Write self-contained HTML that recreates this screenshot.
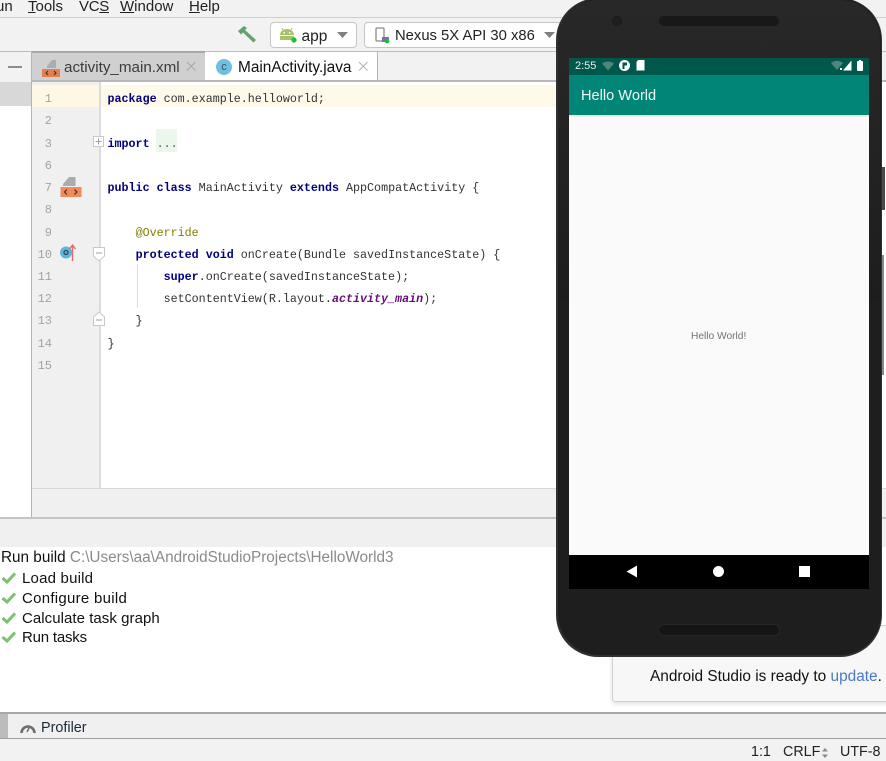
<!DOCTYPE html>
<html>
<head>
<meta charset="utf-8">
<style>
html,body{margin:0;padding:0;background:#fff;}
#r{position:relative;width:886px;height:761px;overflow:hidden;background:#fff;font-family:"Liberation Sans",sans-serif;color:#1c1c1c;}
.a{position:absolute;}
.t{position:absolute;white-space:nowrap;}
.c{position:absolute;left:107.5px;white-space:pre;font:11.7px/14px "Liberation Mono",monospace;color:#333;}
.c b{color:#000080;font-weight:bold;}
.n{position:absolute;left:32px;width:20px;text-align:right;font:12px/14px "Liberation Mono",monospace;color:#a3a3a3;}
.me{position:absolute;top:-2px;font-size:15px;line-height:17px;color:#222;white-space:nowrap;}
.b{position:absolute;left:22px;font-size:15px;line-height:18px;color:#111;white-space:nowrap;}
</style>
</head>
<body>
<div id="r">
  <!-- menu -->
  <div class="a" style="left:0;top:0;width:886px;height:17px;background:#f2f2f2"></div>
  <div class="me" style="left:-4px">un</div>
  <div class="me" style="left:28px"><u>T</u>ools</div>
  <div class="me" style="left:79px;letter-spacing:-.3px">VC<u>S</u></div>
  <div class="me" style="left:120px"><u>W</u>indow</div>
  <div class="me" style="left:189px"><u>H</u>elp</div>
  <div class="a" style="left:0;top:17px;width:886px;height:1px;background:#cfcfcf"></div>
  <!-- toolbar -->
  <div class="a" style="left:0;top:18px;width:886px;height:34px;background:#f2f2f2"></div>
  <div class="a" style="left:0;top:51px;width:886px;height:1px;background:#bdbdbd"></div>
  <svg class="a" style="left:236px;top:24px" width="22" height="20" viewBox="0 0 22 20"><path d="M2 7 L8 2 L11 4 L9 6 L20 16 L17.5 18.5 L7 8.5 L5 10.5 Z" fill="#5fa36d"/></svg>

  <div class="a" style="left:270px;top:22px;width:85px;height:24px;border:1px solid #c6c6c6;border-radius:4px;background:#fff"></div>
  <svg class="a" style="left:279px;top:28px" width="20" height="17" viewBox="0 0 20 17"><path d="M1 7 A7 6 0 0 1 15 7 Z M1 8 H15 V12 H1 Z" fill="#a4c36a"/><path d="M4 2 L3 0 M12 2 L13 0" stroke="#a4c36a"/><rect x="4.500" y="4" width="1.500" height="1.500" fill="#fff"/><rect x="10" y="4" width="1.500" height="1.500" fill="#fff"/><circle cx="15" cy="12" r="2.6" fill="#1fc02f"/></svg>
  <div class="t" style="left:301.5px;top:27.500px;font-size:15.500px;line-height:17px;color:#222">app</div>
  <svg class="a" style="left:337px;top:32px" width="12" height="8"><path d="M0 0 H11 L5.5 6 Z" fill="#808080"/></svg>

  <div class="a" style="left:364px;top:22px;width:200px;height:24px;border:1px solid #c6c6c6;border-radius:4px;background:#fff"></div>
  <svg class="a" style="left:375px;top:27px" width="18" height="18" viewBox="0 0 18 18"><rect x="1" y="1" width="8" height="13" rx="1" fill="none" stroke="#8a8a8a" stroke-width="1.3"/><rect x="7" y="10" width="7" height="5" fill="#8268b8"/><circle cx="12" cy="14" r="2.4" fill="#1fc02f"/></svg>
  <div class="t" style="left:395px;top:27.500px;font-size:14.800px;line-height:17px;color:#222">Nexus 5X API 30 x86</div>
  <svg class="a" style="left:544px;top:32px" width="12" height="8"><path d="M0 0 H11 L5.5 6 Z" fill="#808080"/></svg>

  <!-- left side -->
  <div class="a" style="left:0;top:52px;width:31px;height:30px;background:#f2f2f2"></div>
  <div class="a" style="left:8px;top:66px;width:14px;height:2px;background:#8c8c8c"></div>
  <div class="a" style="left:0;top:82px;width:31px;height:24px;background:#d8d8d8"></div>
  <div class="a" style="left:31px;top:52px;width:1px;height:465px;background:#b4b4b4"></div>

  <!-- tabs -->
  <div class="a" style="left:32px;top:52px;width:854px;height:29px;background:#f2f2f2"></div>
  <div class="a" style="left:32px;top:52px;width:173px;height:28px;background:#d0d0d0;border-right:1px solid #adadad"></div>
  <div class="a" style="left:32px;top:51px;width:173px;height:2px;background:#a8a8a8"></div>
  <svg class="a" style="left:42px;top:59px" width="18" height="19" viewBox="0 0 18 19"><path d="M5 7 L10 1 H14 V9 H5 Z" fill="#a8adb2"/><rect x="0" y="10" width="18" height="8" fill="#e57f50"/><path d="M6 12 L4 14 L6 16 M12 12 L14 14 L12 16" stroke="#3a2a20" fill="none" stroke-width="1"/></svg>
  <div class="t" style="left:64px;top:59px;font-size:15.200px;line-height:18px;color:#3c3c3c">activity_main.xml</div>
  <svg class="a" style="left:186px;top:61px" width="11" height="11"><path d="M1 1 L9.5 9.5 M9.5 1 L1 9.5" stroke="#a8a8a8" stroke-width="1.1"/></svg>
  <div class="a" style="left:205px;top:52px;width:172px;height:29px;background:#fff;border-right:1px solid #b4b4b4"></div>
  <div class="a" style="left:216px;top:59px;width:16px;height:16px;border-radius:50%;background:#6fc0e0;color:#34505c;font:11px/16px 'Liberation Sans',sans-serif;text-align:center">c</div>
  <div class="t" style="left:238px;top:59px;font-size:15.400px;line-height:18px;color:#111">MainActivity.java</div>
  <svg class="a" style="left:358px;top:61px" width="11" height="11"><path d="M1 1 L9.5 9.5 M9.5 1 L1 9.5" stroke="#b4b4b4" stroke-width="1.1"/></svg>
  <div class="a" style="left:32px;top:80px;width:854px;height:2px;background:#b8b8b8"></div>

  <!-- gutter + editor -->
  <div class="a" style="left:32px;top:82px;width:67px;height:406px;background:#f0f0f0"></div>
  <div class="a" style="left:99px;top:82px;width:2px;height:406px;background:#dcdcdc"></div>
  <div class="a" style="left:32px;top:85px;width:67px;height:22px;background:#fdf7e3"></div>
  <div class="a" style="left:101px;top:85px;width:460px;height:22px;background:#fef9e8"></div>
  <div class="a" style="left:156px;top:129px;width:21px;height:23px;background:#ebf7eb"></div>

  <div class="n" style="top:92px">1</div>
  <div class="n" style="top:114px">2</div>
  <div class="n" style="top:137px">3</div>
  <div class="n" style="top:159px">6</div>
  <div class="n" style="top:181px">7</div>
  <div class="n" style="top:203px">8</div>
  <div class="n" style="top:226px">9</div>
  <div class="n" style="top:248px">10</div>
  <div class="n" style="top:270px">11</div>
  <div class="n" style="top:292px">12</div>
  <div class="n" style="top:314px">13</div>
  <div class="n" style="top:337px">14</div>
  <div class="n" style="top:359px">15</div>

  <div class="c" style="top:92px"><b>package</b> com.example.helloworld;</div>
  <div class="c" style="top:137px"><b>import</b> <span style="color:#555">...</span></div>
  <div class="c" style="top:181px"><b>public class</b> MainActivity <b>extends</b> AppCompatActivity {</div>
  <div class="c" style="top:226px">    <span style="color:#808000">@Override</span></div>
  <div class="c" style="top:248px">    <b>protected void</b> onCreate(Bundle savedInstanceState) {</div>
  <div class="c" style="top:270px">        <b>super</b>.onCreate(savedInstanceState);</div>
  <div class="c" style="top:292px">        setContentView(R.layout.<b style="color:#660e7a;font-style:italic">activity_main</b>);</div>
  <div class="c" style="top:314px">    }</div>
  <div class="c" style="top:337px">}</div>

  <!-- gutter icons -->
  <svg class="a" style="left:60px;top:175px" width="22" height="23" viewBox="0 0 22 23"><path d="M3 9 L9 2 H15.500 V11 H3 Z" fill="#a8adb2"/><rect x="0.500" y="12" width="21" height="10" fill="#f08a58"/><path d="M7 14.500 L4.500 17 L7 19.500 M14.500 14.500 L17 17 L14.500 19.500" stroke="#3a2a20" fill="none" stroke-width="1.1"/></svg>
  <svg class="a" style="left:59px;top:243px" width="20" height="19" viewBox="0 0 20 19"><circle cx="7" cy="9.500" r="6" fill="#5cb6dc"/><circle cx="7" cy="9.500" r="2" fill="none" stroke="#33485a" stroke-width="1.300"/><path d="M13.500 18 V3 M10.500 6 L13.500 2 L16.500 6" stroke="#e06a6a" fill="none" stroke-width="1.400"/></svg>
  <svg class="a" style="left:93px;top:136px" width="13" height="13"><rect x="0.500" y="0.500" width="10" height="10" fill="#fff" stroke="#c8c8c8"/><path d="M2.500 5.500 H8.500 M5.500 2.500 V8.500" stroke="#a0a0a0"/></svg>
  <svg class="a" style="left:93px;top:247px" width="13" height="15"><path d="M0.500 0.500 H11.500 V9 L6 14 L0.500 9 Z" fill="#fff" stroke="#c8c8c8"/><path d="M3 6 H9" stroke="#a0a0a0"/></svg>
  <svg class="a" style="left:93px;top:311px" width="13" height="15"><path d="M0.500 14.500 H11.500 V6 L6 1 L0.500 6 Z" fill="#fff" stroke="#c8c8c8"/><path d="M3 9 H9" stroke="#a0a0a0"/></svg>
  <div class="a" style="left:137px;top:264px;width:1px;height:44px;background:#dedede"></div>

  <!-- editor bottom -->
  <div class="a" style="left:32px;top:488px;width:854px;height:29px;background:#f0f0f0;border-top:1px solid #d8d8d8;box-sizing:border-box"></div>
  <div class="a" style="left:0;top:517px;width:886px;height:2px;background:#c4c4c4"></div>
  <div class="a" style="left:0;top:519px;width:886px;height:28px;background:#f0f0f0"></div>

  <!-- build -->
  <div class="t" style="left:1px;top:549px;font-size:15.300px;line-height:18px;color:#111">Run build <span style="color:#8a8a8a">C:\Users\aa\AndroidStudioProjects\HelloWorld3</span></div>
  <svg class="a" style="left:1px;top:571px" width="16" height="14"><path d="M1.500 7 L6 11 L14 2.500" fill="none" stroke="#7cc070" stroke-width="3"/></svg>
  <svg class="a" style="left:1px;top:591px" width="16" height="14"><path d="M1.500 7 L6 11 L14 2.500" fill="none" stroke="#7cc070" stroke-width="3"/></svg>
  <svg class="a" style="left:1px;top:611px" width="16" height="14"><path d="M1.500 7 L6 11 L14 2.500" fill="none" stroke="#7cc070" stroke-width="3"/></svg>
  <svg class="a" style="left:1px;top:630px" width="16" height="14"><path d="M1.500 7 L6 11 L14 2.500" fill="none" stroke="#7cc070" stroke-width="3"/></svg>
  <div class="b" style="top:570px;letter-spacing:.2px">Load build</div>
  <div class="b" style="top:590px;letter-spacing:.28px">Configure build</div>
  <div class="b" style="top:610px;letter-spacing:.05px">Calculate task graph</div>
  <div class="b" style="top:629px;letter-spacing:-.2px">Run tasks</div>

  <!-- notification -->
  <div class="a" style="left:612px;top:625px;width:280px;height:77px;background:#f7f7f7;border:1px solid #d0d0d0;box-sizing:border-box;border-radius:3px;box-shadow:0 2px 5px rgba(0,0,0,.12)"></div>
  <div class="t" style="left:650px;top:668px;font-size:15.400px;line-height:18px;color:#111">Android Studio is ready to <span style="color:#4a78c8">update</span>.</div>

  <!-- bottom bars -->
  <div class="a" style="left:0;top:712px;width:886px;height:2px;background:#a8a8a8"></div>
  <div class="a" style="left:0;top:714px;width:886px;height:24px;background:#f0f0f0"></div>
  <div class="a" style="left:0;top:714px;width:8px;height:24px;background:#bcbcbc"></div>
  <svg class="a" style="left:20px;top:722px" width="16" height="12" viewBox="0 0 16 12"><path d="M1.500 11 A6.500 6.500 0 0 1 14.500 11" fill="none" stroke="#6e6e6e" stroke-width="2.600"/><path d="M7 10 L10 4" stroke="#6e6e6e" stroke-width="1.500"/></svg>
  <div class="t" style="left:41px;top:720px;font-size:14.400px;line-height:16px;color:#1c2a3a">Profiler</div>
  <div class="a" style="left:0;top:738px;width:886px;height:1px;background:#a0a0a0"></div>
  <div class="a" style="left:0;top:739px;width:886px;height:22px;background:#f2f2f2"></div>
  <div class="t" style="left:751px;top:744px;font-size:14.300px;line-height:17px;color:#222">1:1</div>
  <div class="t" style="left:783px;top:744px;font-size:14.300px;line-height:17px;color:#222">CRLF</div>
  <svg class="a" style="left:821px;top:748px" width="8" height="11"><path d="M4 0 L7 3.500 H1 Z M4 10 L7 6.500 H1 Z" fill="#8a8a8a"/></svg>
  <div class="t" style="left:840px;top:744px;font-size:14.300px;line-height:17px;color:#222">UTF-8</div>

  <!-- phone side buttons -->
  <div class="a" style="left:882px;top:167px;width:3px;height:43px;background:#4a4a4a"></div>
  <div class="a" style="left:882px;top:255px;width:2px;height:120px;background:#8a8a8a"></div>

  <!-- phone -->
  <div class="a" style="left:556px;top:-2px;width:326px;height:659px;background:#303030;border-radius:42px"></div>
  <div class="a" style="left:557.500px;top:-1px;width:323px;height:656px;background:#1f1e1e;border-radius:41px"></div>
  <div class="a" style="left:558px;top:0;width:322px;height:300px;background:linear-gradient(#292828,#1e1d1d);border-radius:40px 40px 0 0"></div>
  <div class="a" style="left:659px;top:16px;width:120px;height:10px;background:#181818;border-radius:5px"></div>
  <div class="a" style="left:612px;top:16px;width:10px;height:10px;background:#211f21;border-radius:50%;box-shadow:inset 0 0 2px #181618"></div>
  <div class="a" style="left:659px;top:625px;width:120px;height:10px;background:#151515;border-radius:5px;box-shadow:0 0 0 1px #262626"></div>

  <div class="a" style="left:569px;top:58px;width:300px;height:17px;background:#00574b"></div>
  <div class="t" style="left:575px;top:60px;font-size:11px;line-height:13px;color:#e4efec">2:55</div>
  <svg class="a" style="left:602px;top:61px" width="12" height="10" viewBox="0 0 12 10"><path d="M0 2.500 Q6 -1.500 12 2.500 L6 9.500 Z" fill="#4d877c"/></svg>
  <div class="a" style="left:619px;top:60px;width:11px;height:11px;border-radius:50%;background:#fff"></div>
  <svg class="a" style="left:621px;top:62px" width="7" height="7"><path d="M1.500 7 V0.500 H6 V3.500 H3.500 V7 Z" fill="#00574b"/></svg>
  <svg class="a" style="left:636px;top:60px" width="9" height="11"><path d="M2 0 H8.500 V10.500 H0.500 V2 Z" fill="#fff"/></svg>
  <svg class="a" style="left:831px;top:60px" width="12" height="11" viewBox="0 0 12 11"><path d="M0 3 Q6 -1.500 12 3 L6 10 Z" fill="#4d877c"/><rect x="9" y="8" width="2" height="2" fill="#fff"/></svg>
  <svg class="a" style="left:843px;top:60px" width="9" height="11"><path d="M8.500 0.500 V10.500 H0 Z" fill="#fff"/></svg>
  <div class="a" style="left:857px;top:61px;width:6px;height:10px;background:#fff;border-radius:1px"></div>
  <div class="a" style="left:859px;top:60px;width:2px;height:1px;background:#fff"></div>

  <div class="a" style="left:569px;top:75px;width:300px;height:40px;background:#008577"></div>
  <div class="t" style="left:581px;top:88px;font-size:14.600px;line-height:17px;color:#f2f8f7">Hello World</div>
  <div class="a" style="left:569px;top:115px;width:300px;height:440px;background:#fafafa"></div>
  <div class="a" style="left:569px;top:115px;width:300px;height:2px;background:#ececec"></div>
  <div class="t" style="left:691px;top:330px;font-size:10.200px;line-height:13px;color:#737373">Hello World!</div>

  <div class="a" style="left:569px;top:555px;width:300px;height:34px;background:#000"></div>
  <svg class="a" style="left:626px;top:565px" width="12" height="13"><path d="M11 0.500 V12.500 L0.500 6.500 Z" fill="#fff"/></svg>
  <div class="a" style="left:713px;top:566px;width:11px;height:11px;background:#fff;border-radius:50%"></div>
  <div class="a" style="left:799px;top:566px;width:11px;height:11px;background:#fff"></div>
</div>
</body>
</html>
